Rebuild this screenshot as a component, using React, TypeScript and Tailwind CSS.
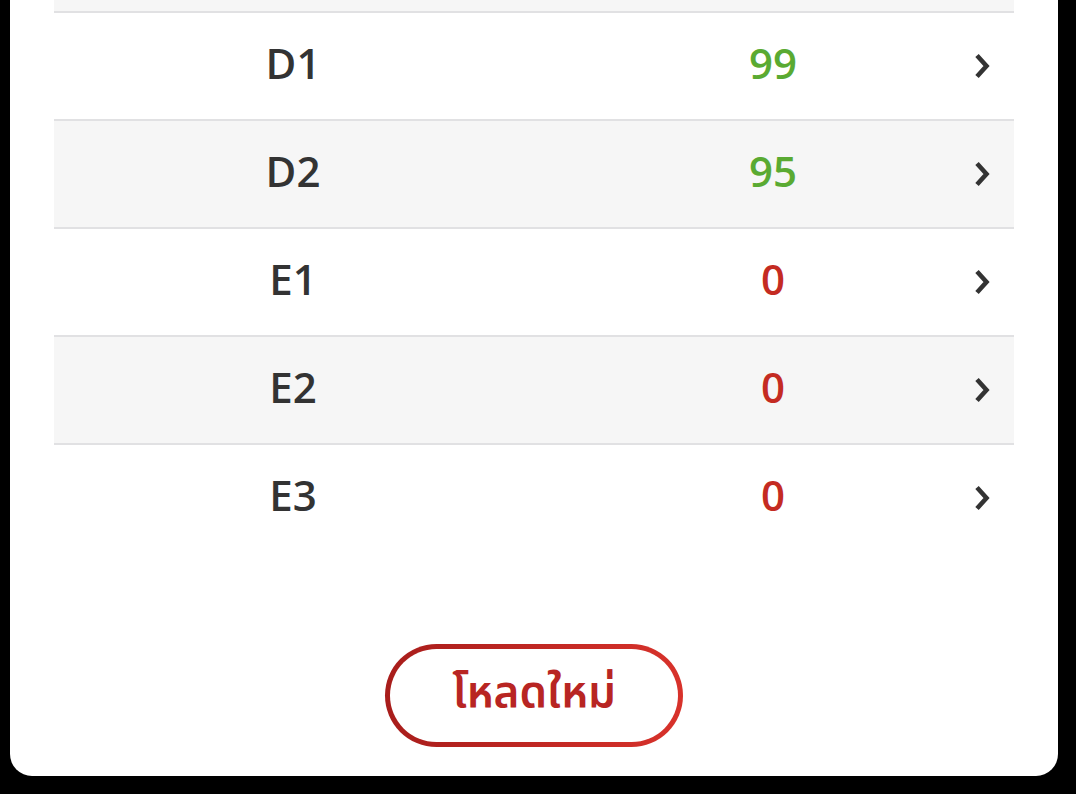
import React from "react";

type Row = { name: string; score: number };

const rows: Row[] = [
  { name: "D1", score: 99 },
  { name: "D2", score: 95 },
  { name: "E1", score: 0 },
  { name: "E2", score: 0 },
  { name: "E3", score: 0 },
];

function Chevron() {
  return (
    <svg width="20" height="28" viewBox="0 0 20 28" fill="none" aria-hidden="true">
      <path d="M5 3.5 L14.5 14 L5 24.5" stroke="#333333" strokeWidth="4.6" strokeLinecap="butt" strokeLinejoin="miter" />
    </svg>
  );
}

export default function App() {
  return (
    <div className="min-h-[794px] w-full bg-black" style={{ fontFamily: '"Open Sans", "Noto Sans", sans-serif' }}>
      <div className="ml-[10px] w-[1048px] h-[776px] bg-white rounded-b-[22px] px-[44px] flex flex-col">
        {/* tail of the previous row */}
        <div className="h-[11px] bg-[#f6f6f6]" />
        {rows.map((r, i) => (
          <div
            key={r.name}
            className={`relative grid grid-cols-[478px_482px] h-[108px] border-t-2 border-[#e1e1e3] ${i % 2 === 1 ? "bg-[#f6f6f6]" : "bg-white"}`}
          >
            <div className="flex items-center justify-center pb-[6px] text-[42px] font-semibold text-[#333333] leading-none">
              {r.name}
            </div>
            <div
              className={`flex items-center justify-center pb-[6px] text-[42px] font-semibold leading-none ${r.score > 0 ? "text-[#5aaa32]" : "text-[#c42b22]"}`}
            >
              {r.score}
            </div>
            <div className="absolute right-[22px] top-0 bottom-0 flex items-center">
              <Chevron />
            </div>
          </div>
        ))}
        <div className="flex-1 flex items-end justify-center pb-[29px]">
          <div className="rounded-full p-[5px] bg-gradient-to-r from-[#a81d1b] to-[#d8322b]">
            <button className="w-[288px] h-[93px] rounded-full bg-white flex items-center justify-center pb-[4px]">
              <span
                className="text-[44px] font-semibold text-[#b82523] leading-none"
                style={{ fontFamily: '"Noto Sans Thai", "Noto Sans Thai UI", "Noto Sans", sans-serif' }}
              >
                โหลดใหม่
              </span>
            </button>
          </div>
        </div>
      </div>
    </div>
  );
}
